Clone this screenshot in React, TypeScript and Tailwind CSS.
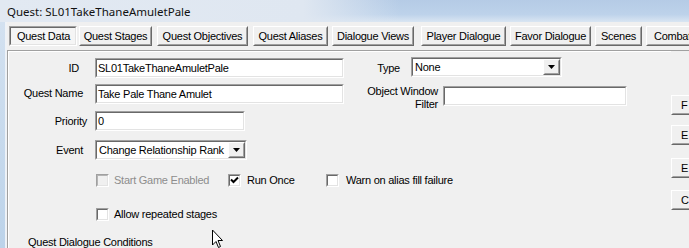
import React from 'react';

const TABS = [
  { label: 'Quest Data', cls: 'ml-[2px] w-[68px]', active: true },
  { label: 'Quest Stages', cls: 'ml-[2px] w-[73px]' },
  { label: 'Quest Objectives', cls: 'ml-[5px] w-[91px]' },
  { label: 'Quest Aliases', cls: 'ml-[5px] w-[75px]' },
  { label: 'Dialogue Views', cls: 'ml-[4px] w-[82px]' },
  { label: 'Player Dialogue', cls: 'ml-[7px] w-[85px]' },
  { label: 'Favor Dialogue', cls: 'ml-[4px] w-[81px]' },
  { label: 'Scenes', cls: 'ml-[4px] w-[47px]' },
  { label: 'Combat', cls: 'ml-[4px] w-[62px] shrink-0', left: true },
];

const Sunken = ({ className = '', inner = 'bg-white', children }: any) => (
  <div className={`border border-t-[#a0a0a0] border-l-[#a0a0a0] border-b-white border-r-white ${className}`}>
    <div className={`h-full border border-t-[#696969] border-l-[#696969] border-b-[#e3e3e3] border-r-[#e3e3e3] flex items-center ${inner}`}>
      {children}
    </div>
  </div>
);

const Raised = ({ className = '', inner = 'bg-[#f0f0f0]', children }: any) => (
  <div className={`border border-t-white border-l-white border-b-[#696969] border-r-[#696969] ${className}`}>
    <div className={`h-full border border-t-[#f0f0f0] border-l-[#f0f0f0] border-b-[#a0a0a0] border-r-[#a0a0a0] flex items-center ${inner}`}>
      {children}
    </div>
  </div>
);

const TextBox = ({ value = '', className = '' }: any) => (
  <Sunken className={`h-[20px] ${className}`}>
    <span className="pl-[1px] whitespace-nowrap">{value}</span>
  </Sunken>
);

const DropArrow = () => (
  <svg width="7" height="4" viewBox="0 0 7 4" className="mx-auto">
    <path d="M0 0 H7 L3.5 4 Z" fill="#000" />
  </svg>
);

const Select = ({ value, className = '' }: any) => (
  <Sunken className={`h-[20px] ${className}`}>
    <span className="pl-[2px] flex-1 whitespace-nowrap overflow-hidden">{value}</span>
    <Raised className="w-[17px] h-full shrink-0">
      <DropArrow />
    </Raised>
  </Sunken>
);

const Check = ({ checked = false, disabled = false }: any) => (
  <Sunken
    className="w-[13px] h-[13px] shrink-0"
    inner={disabled ? 'bg-[#f0f0f0] !border-t-[#b4b4b4] !border-l-[#b4b4b4]' : 'bg-white'}
  >
    {checked && (
      <svg width="9" height="9" viewBox="0 0 9 9" className="block">
        <path d="M1 3.5 L3.5 6 L8 1.5" stroke="#000" strokeWidth="2" fill="none" />
      </svg>
    )}
  </Sunken>
);

const Label = ({ children, className = '' }: any) => (
  <div className={`w-[86px] shrink-0 text-right ${className}`}>{children}</div>
);

export default function App() {
  return (
    <div className="w-[689px] h-[248px] overflow-hidden bg-[#f0f0f0] relative font-['Liberation_Sans',Arial,sans-serif] text-[11px] leading-[13px] tracking-[-0.25px] text-black">
      {/* title bar */}
      <div className="h-[22px] flex items-center pl-[7px] bg-[image:linear-gradient(90deg,#e2e9f2_0%,#dfe7f1_44%,rgba(214,227,241,0)_58%),linear-gradient(180deg,#b5cbe6_0%,#bdd2ea_65%,#d9e5f2_100%)]">
        <span className="font-['Noto_Sans',sans-serif] text-[11.5px] tracking-normal text-[#111]">Quest: SL01TakeThaneAmuletPale</span>
      </div>

      <div className="flex h-[226px]">
        <div className="w-[7px] shrink-0 flex">
          <div className="w-[5px] bg-[linear-gradient(180deg,#d3e1f0,#bcd3ea)]" />
          <div className="w-[2px] bg-[#eef2f7]" />
        </div>

        <div className="flex-1 flex flex-col min-w-0">
          {/* tabs */}
          <div className="flex pt-[4px] h-[24px] shrink-0 overflow-hidden">
            {TABS.map((t) =>
              t.active ? (
                <div
                  key={t.label}
                  className={`${t.cls} h-[20px] shrink-0 border border-t-[#a0a0a0] border-l-[#a0a0a0] border-b-white border-r-white`}
                >
                  <div className="h-full border border-t-[#696969] border-l-[#696969] border-b-[#e3e3e3] border-r-[#e3e3e3] bg-[#f5f5f5] flex items-center justify-center pt-[1px] pl-[1px]">
                    {t.label}
                  </div>
                </div>
              ) : (
                <Raised key={t.label} className={`${t.cls} h-[20px] shrink-0`}>
                  <span className={t.left ? 'pl-[6px] whitespace-nowrap' : 'w-full text-center whitespace-nowrap'}>{t.label}</span>
                </Raised>
              )
            )}
          </div>

          {/* tab page */}
          <div className="mt-[4px] flex-1 flex border-t border-l border-t-[#a0a0a0] border-l-[#a0a0a0] min-h-0">
            <div className="w-[663px] shrink-0 flex flex-col pt-[6px] border-t border-l border-white">
              {/* ID / Type */}
              <div className="flex items-center h-[20px]">
                <Label className="pr-[16px]">ID</Label>
                <TextBox value="SL01TakeThaneAmuletPale" className="w-[249px]" />
                <div className="w-[67px] text-right pr-[11px]">Type</div>
                <Select value="None" className="w-[151px] -mt-[2px]" />
              </div>

              {/* Quest Name / Object Window Filter */}
              <div className="flex items-start mt-[6px] h-[23px]">
                <Label className="pr-[12px] mt-[3px]">Quest Name</Label>
                <TextBox value="Take Pale Thane Amulet" className="w-[249px]" />
                <div className="w-[99px] text-right pr-[5px] pt-[1px]">
                  Object Window
                  <br />
                  Filter
                </div>
                <TextBox className="w-[184px] mt-[2px]" />
              </div>

              {/* Priority */}
              <div className="flex items-center mt-[4px] h-[20px]">
                <Label className="pr-[8px]">Priority</Label>
                <TextBox value="0" className="w-[150px]" />
              </div>

              {/* Event */}
              <div className="flex items-center mt-[9px] h-[20px]">
                <Label className="pr-[12px]">Event</Label>
                <Select value="Change Relationship Rank" className="w-[152px]" />
              </div>

              {/* checkboxes */}
              <div className="flex items-center mt-[14px] h-[13px] pl-[87px]">
                <div className="w-[132px] flex items-center">
                  <Check disabled />
                  <span className="ml-[5px] text-[#8d8d8d] whitespace-nowrap">Start Game Enabled</span>
                </div>
                <div className="w-[98px] flex items-center">
                  <Check checked />
                  <span className="ml-[6px] whitespace-nowrap">Run Once</span>
                </div>
                <div className="flex items-center">
                  <Check />
                  <span className="ml-[7px] whitespace-nowrap">Warn on alias fill failure</span>
                </div>
              </div>

              <div className="flex items-center mt-[21px] h-[13px] pl-[87px]">
                <Check />
                <span className="ml-[5px] whitespace-nowrap">Allow repeated stages</span>
              </div>

              <div className="mt-[15px] pl-[19px] whitespace-nowrap">Quest Dialogue Conditions</div>
            </div>

            {/* right side buttons (cut off) */}
            <div className="flex flex-col w-[40px] shrink-0 pt-[44px]">
              <Raised className="h-[20px] w-[40px]"><span className="pl-[8px]">F</span></Raised>
              <Raised className="h-[20px] w-[40px] mt-[10px]"><span className="pl-[8px]">E</span></Raised>
              <Raised className="h-[20px] w-[40px] mt-[13px]"><span className="pl-[8px]">E</span></Raised>
              <Raised className="h-[20px] w-[40px] mt-[12px]"><span className="pl-[8px]">C</span></Raised>
            </div>
          </div>
        </div>
      </div>

      {/* mouse pointer */}
      <svg width="13" height="20" viewBox="0 0 13 20" className="absolute left-[211px] top-[229px]">
        <path d="M1.5 1 L1.5 16 L5 12.5 L7.5 18.5 L9.5 17.5 L7 11.5 L11.5 11.5 Z" fill="#fff" stroke="#000" strokeWidth="1" strokeLinejoin="miter" />
      </svg>
    </div>
  );
}
